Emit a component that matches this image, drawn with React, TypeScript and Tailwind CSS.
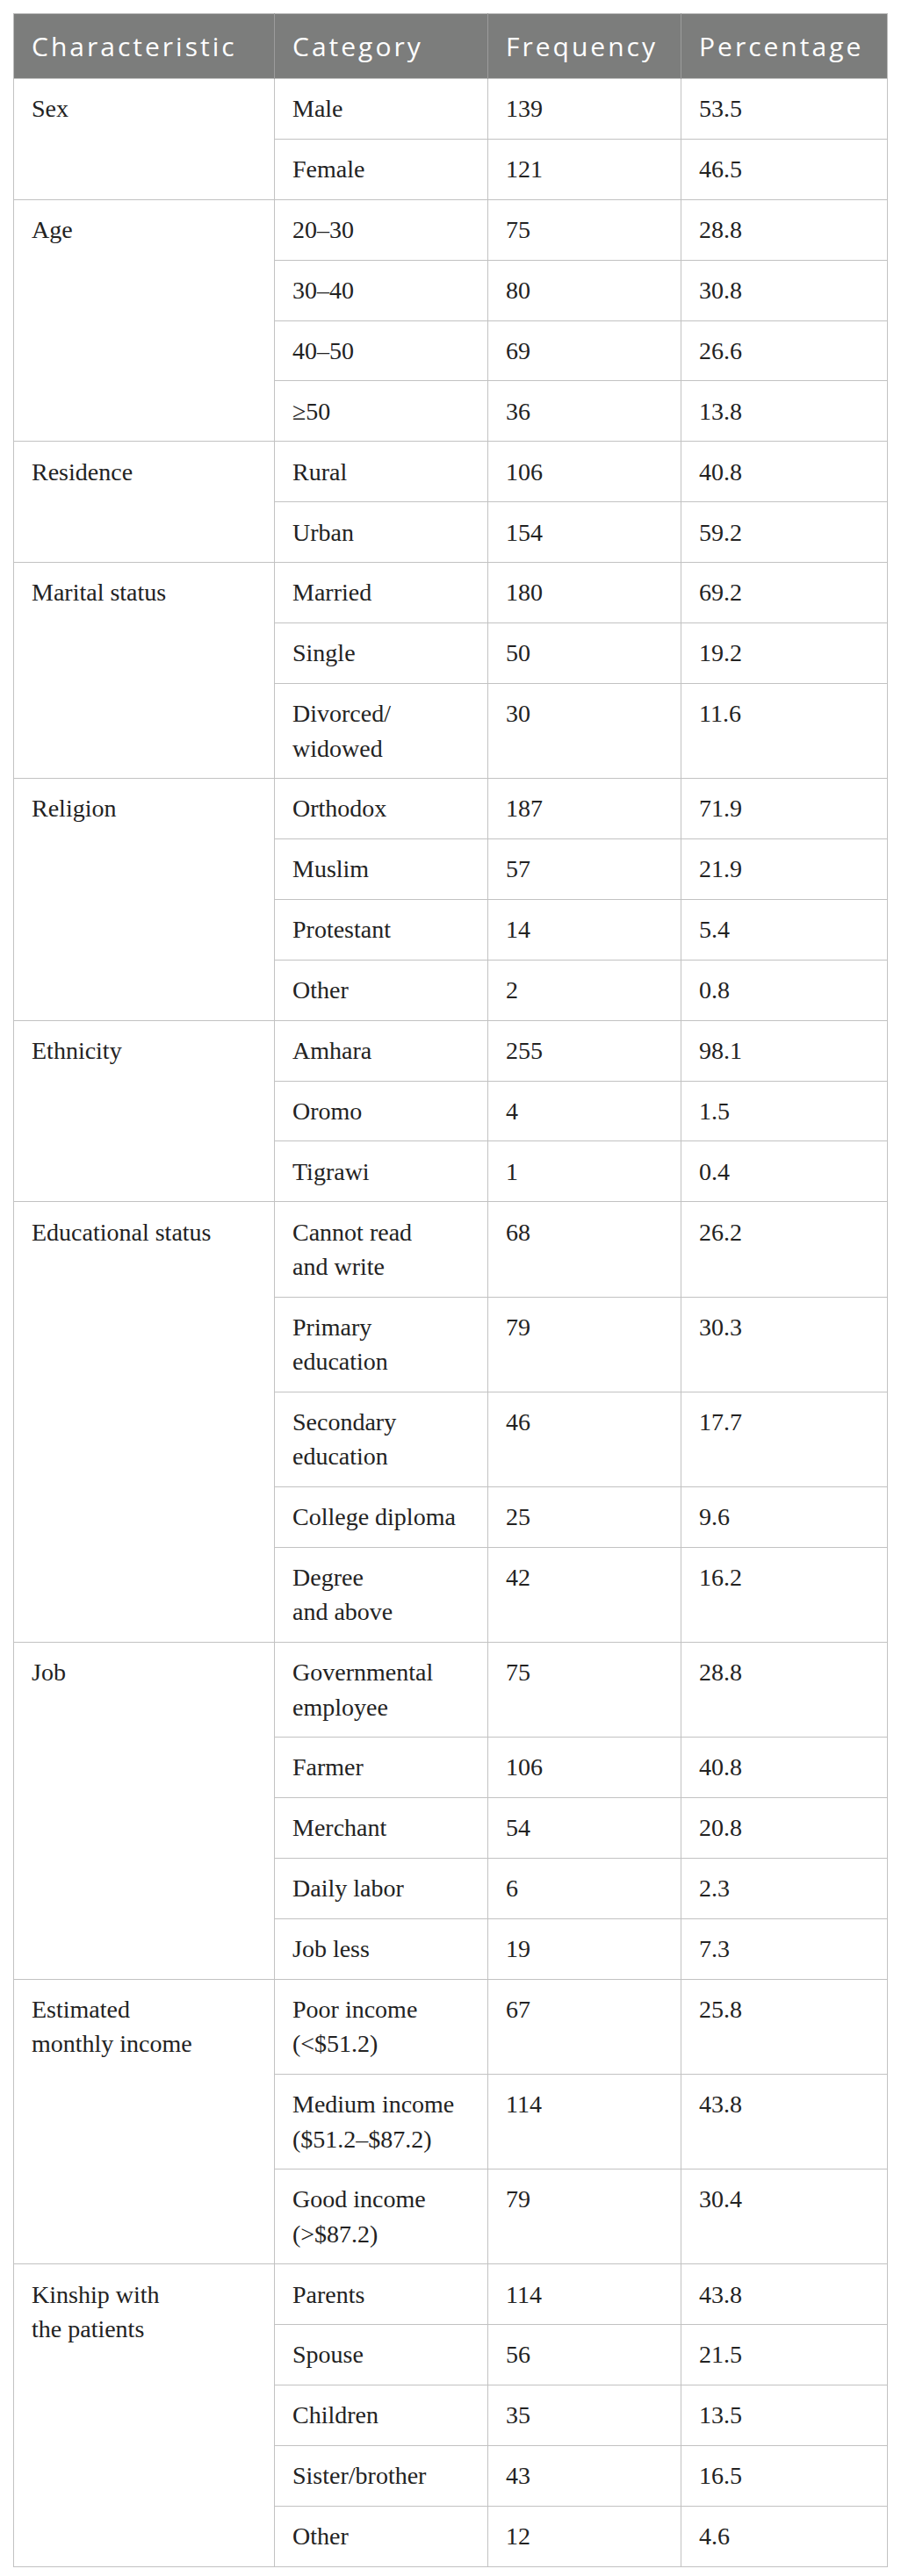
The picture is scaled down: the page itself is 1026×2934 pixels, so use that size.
import React from "react";

type Row = { cat: string[]; freq: string; pct: string };
type Group = { label: string[]; rows: Row[] };

const r = (cat: string | string[], freq: string, pct: string): Row => ({
  cat: Array.isArray(cat) ? cat : [cat],
  freq,
  pct,
});

const groups: Group[] = [
  { label: ["Sex"], rows: [r("Male", "139", "53.5"), r("Female", "121", "46.5")] },
  {
    label: ["Age"],
    rows: [r("20–30", "75", "28.8"), r("30–40", "80", "30.8"), r("40–50", "69", "26.6"), r("≥50", "36", "13.8")],
  },
  { label: ["Residence"], rows: [r("Rural", "106", "40.8"), r("Urban", "154", "59.2")] },
  {
    label: ["Marital status"],
    rows: [r("Married", "180", "69.2"), r("Single", "50", "19.2"), r(["Divorced/", "widowed"], "30", "11.6")],
  },
  {
    label: ["Religion"],
    rows: [r("Orthodox", "187", "71.9"), r("Muslim", "57", "21.9"), r("Protestant", "14", "5.4"), r("Other", "2", "0.8")],
  },
  {
    label: ["Ethnicity"],
    rows: [r("Amhara", "255", "98.1"), r("Oromo", "4", "1.5"), r("Tigrawi", "1", "0.4")],
  },
  {
    label: ["Educational status"],
    rows: [
      r(["Cannot read", "and write"], "68", "26.2"),
      r(["Primary", "education"], "79", "30.3"),
      r(["Secondary", "education"], "46", "17.7"),
      r("College diploma", "25", "9.6"),
      r(["Degree", "and above"], "42", "16.2"),
    ],
  },
  {
    label: ["Job"],
    rows: [
      r(["Governmental", "employee"], "75", "28.8"),
      r("Farmer", "106", "40.8"),
      r("Merchant", "54", "20.8"),
      r("Daily labor", "6", "2.3"),
      r("Job less", "19", "7.3"),
    ],
  },
  {
    label: ["Estimated", "monthly income"],
    rows: [
      r(["Poor income", "(<$51.2)"], "67", "25.8"),
      r(["Medium income", "($51.2–$87.2)"], "114", "43.8"),
      r(["Good income", "(>$87.2)"], "79", "30.4"),
    ],
  },
  {
    label: ["Kinship with", "the patients"],
    rows: [
      r("Parents", "114", "43.8"),
      r("Spouse", "56", "21.5"),
      r("Children", "35", "13.5"),
      r("Sister/brother", "43", "16.5"),
      r("Other", "12", "4.6"),
    ],
  },
];

const Lines = ({ lines }: { lines: string[] }) => (
  <>
    {lines.map((l, i) => (
      <React.Fragment key={i}>
        {i > 0 && <br />}
        {l}
      </React.Fragment>
    ))}
  </>
);

const td =
  "border border-[#c2c2c2] align-top text-left pl-[20px] pr-[12px] pt-[14.3px] pb-[14.3px] leading-[39.3px]";
const th =
  "border-x border-[#9c9c9c] text-left font-normal pl-[20px] pr-[8px] pt-[15px] pb-[14px] leading-[44px]";

export default function App() {
  return (
    <div className="bg-white w-[1026px] min-h-[2934px] pt-[15px] pl-[15px]">
      <table
        className="table-fixed border-collapse w-[995px] border-[1.5px] border-[#bdbdbd] text-[#222] text-[28px]"
        style={{ fontFamily: '"Liberation Serif", "Times New Roman", serif' }}
      >
        <colgroup>
          <col className="w-[297px]" />
          <col className="w-[243px]" />
          <col className="w-[220px]" />
          <col className="w-[235px]" />
        </colgroup>
        <thead>
          <tr
            className="bg-[#7c7d7c] text-white text-[30px] tracking-[3px]"
            style={{ fontFamily: '"Open Sans", "Noto Sans", sans-serif' }}
          >
            <th className={th + " border-l-[#bdbdbd]"}>Characteristic</th>
            <th className={th}>Category</th>
            <th className={th}>Frequency</th>
            <th className={th + " border-r-[#bdbdbd]"}>Percentage</th>
          </tr>
        </thead>
        <tbody>
          {groups.map((g, gi) =>
            g.rows.map((row, ri) => (
              <tr key={gi + "-" + ri}>
                {ri === 0 && (
                  <td rowSpan={g.rows.length} className={td}>
                    <Lines lines={g.label} />
                  </td>
                )}
                <td className={td}>
                  <Lines lines={row.cat} />
                </td>
                <td className={td}>{row.freq}</td>
                <td className={td}>{row.pct}</td>
              </tr>
            ))
          )}
        </tbody>
      </table>
    </div>
  );
}
